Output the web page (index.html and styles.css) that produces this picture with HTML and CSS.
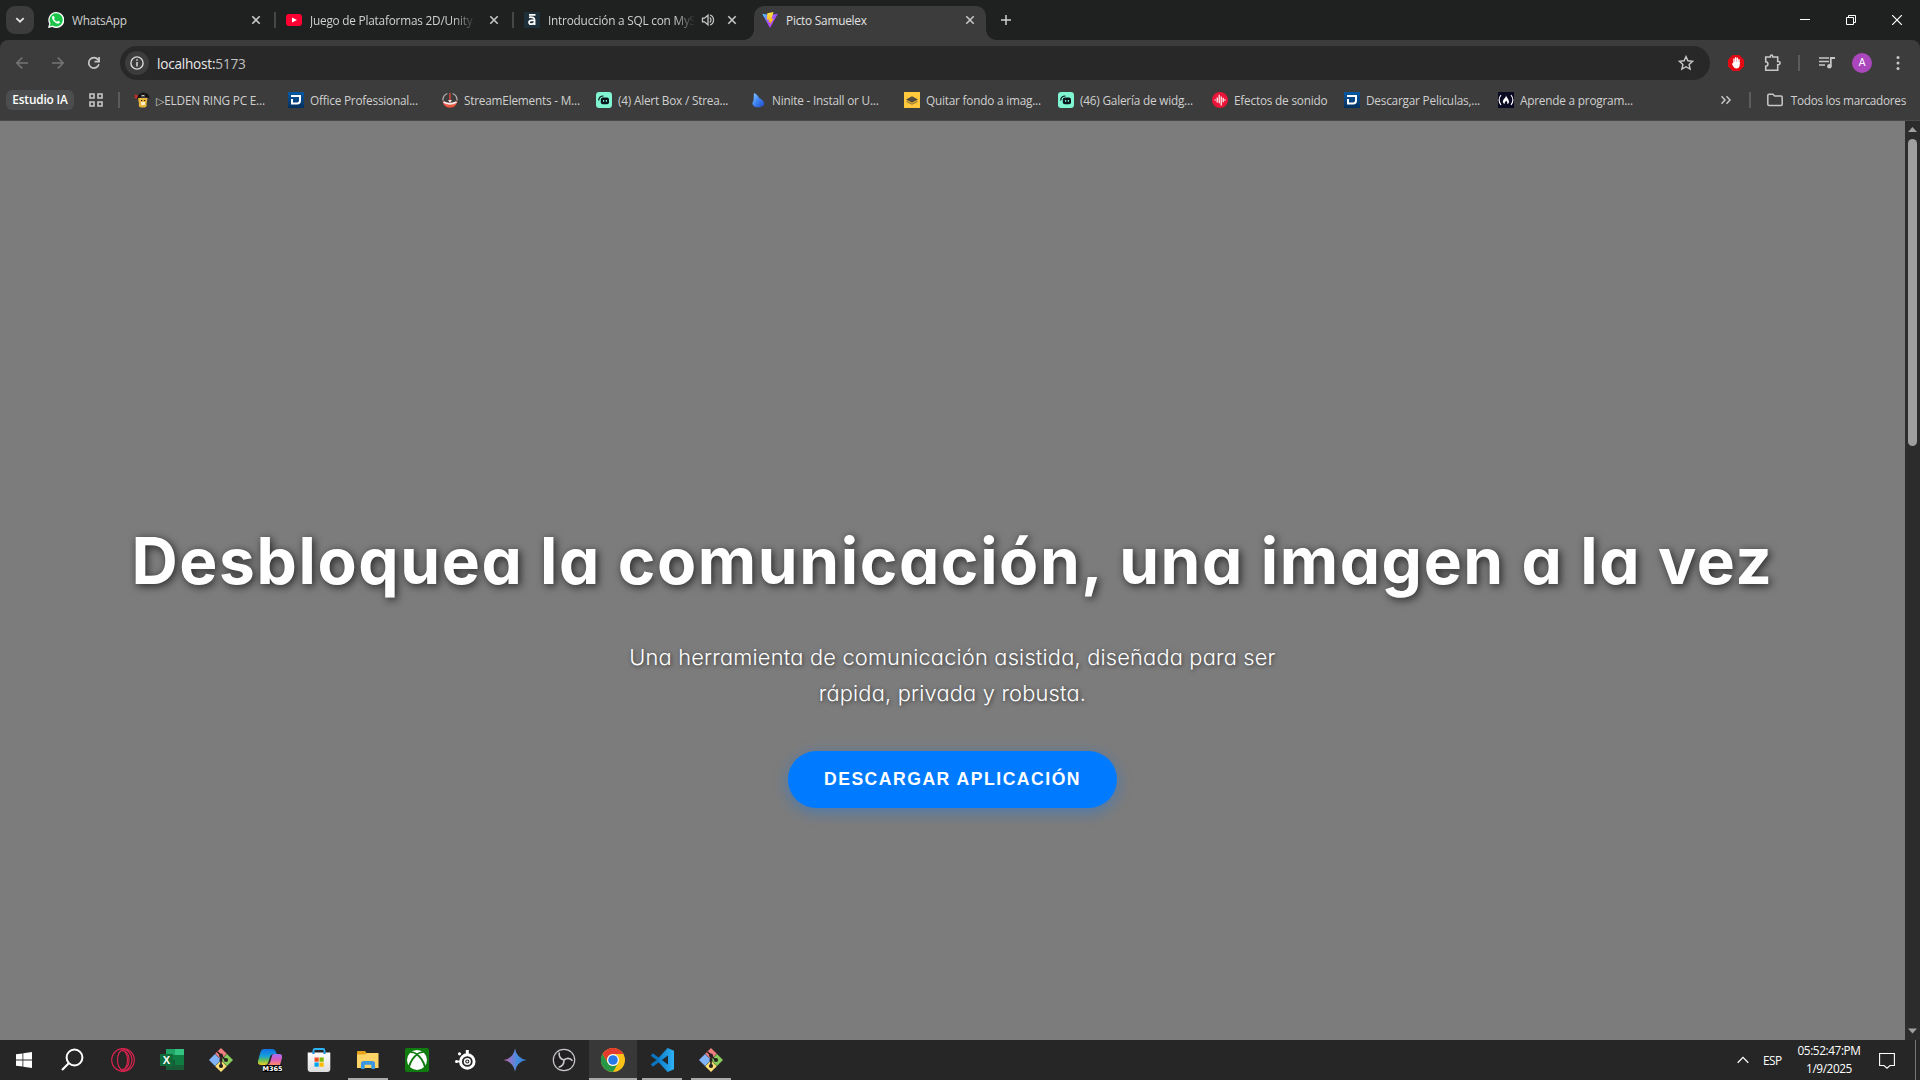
FILE: index.html
```html
<!DOCTYPE html>
<html lang="es">
<head>
<meta charset="utf-8">
<title>Picto Samuelex</title>
<link rel="stylesheet" href="styles.css">
</head>
<body>
<svg class="defs" width="0" height="0">
  <defs>
    <linearGradient id="navy" x1="0" y1="0" x2="0" y2="1"><stop offset="0" stop-color="#0759a5"/><stop offset="1" stop-color="#042f5c"/></linearGradient>
    <linearGradient id="vite" x1="0" y1="0" x2="1" y2="1"><stop offset="0" stop-color="#41d1ff"/><stop offset=".5" stop-color="#a34dfd"/><stop offset="1" stop-color="#bd34fe"/></linearGradient>
    <linearGradient id="bolt" x1="0" y1="0" x2="0" y2="1"><stop offset="0" stop-color="#ffe14a"/><stop offset="1" stop-color="#ffa800"/></linearGradient>
    <linearGradient id="gem" x1="0" y1="0" x2="1" y2="0"><stop offset="0" stop-color="#c2679a"/><stop offset=".35" stop-color="#7d7bd0"/><stop offset=".6" stop-color="#458fe0"/><stop offset="1" stop-color="#3578d4"/></linearGradient>
    <linearGradient id="cop1" x1="0" y1="0" x2="0" y2="1"><stop offset="0" stop-color="#0f70e8"/><stop offset=".45" stop-color="#18a0d8"/><stop offset=".7" stop-color="#62bd5a"/><stop offset="1" stop-color="#f2cf22"/></linearGradient>
    <linearGradient id="cop2" x1="0" y1="0" x2="0" y2="1"><stop offset="0" stop-color="#a56cf5"/><stop offset=".5" stop-color="#da5cc0"/><stop offset="1" stop-color="#ff8a68"/></linearGradient>
    <linearGradient id="drop" x1="0" y1="0" x2="1" y2="1"><stop offset="0" stop-color="#8ccaff"/><stop offset=".5" stop-color="#3d83f5"/><stop offset="1" stop-color="#2347c4"/></linearGradient>
    <linearGradient id="code" x1="0" y1="0" x2="1" y2="0"><stop offset="0" stop-color="#0a7cc9"/><stop offset="1" stop-color="#2fb1f5"/></linearGradient>
    <linearGradient id="bag" x1="0" y1="0" x2="0" y2="1"><stop offset="0" stop-color="#fff"/><stop offset="1" stop-color="#dcdcdc"/></linearGradient>
    <symbol id="close" viewBox="0 0 16 16"><path d="M4.3 4.3l7.4 7.4M11.7 4.3l-7.4 7.4" stroke="#c7c7c7" stroke-width="1.6"/></symbol>
    <symbol id="dlogo" viewBox="0 0 16 16"><path fill="url(#navy)" d="M0 0h16v16H0z"/><path d="M3 4h9v4.500q0 3-3 3H4V7" fill="none" stroke="#fff" stroke-width="2"/></symbol>
    <symbol id="slabs" viewBox="0 0 16 16"><rect width="16" height="16" rx="3.2" fill="#80f5d2"/><path d="M2.700 8.500Q2.900 4 7.500 4" fill="none" stroke="#09161d" stroke-width="1.200"/><rect x="4.800" y="5.500" width="8.200" height="6.800" rx="2" fill="#09161d"/><path d="M7.600 8v1.800M10.400 8v1.800" stroke="#80f5d2" stroke-width="1.200"/></symbol>
    <symbol id="git" viewBox="0 0 24 24"><path fill="#f07f7f" d="M12 0l5.800 5.800L12 11.600 6.200 5.800z"/><path fill="#81b3fb" d="M6 6l6 6-6 6-6-6z"/><path fill="#88cd5c" d="M18 6l6 6-6 6-6-6z"/><path fill="#ffe075" d="M12 12.400l5.800 5.800L12 24l-5.800-5.800z"/><g stroke="#262020" fill="none" stroke-width="1.600"><path d="M8.400 3.800l3.600 3.600v11M12 7.500l4.800 4.700"/></g><g fill="#262020"><circle cx="12" cy="7.600" r="2"/><circle cx="17" cy="12" r="2.100"/><circle cx="12" cy="18" r="2.100"/><circle cx="12" cy="12" r="1.600"/></g></symbol>
  </defs>
</svg>

<header class="browser">
  <div class="tabstrip">
    <div class="tabsearch"><svg width="12" height="12" viewBox="0 0 12 12"><path d="M2.300 4.100L6 7.700l3.700-3.600" fill="none" stroke="#e3e3e3" stroke-width="1.800"/></svg></div>
    <div class="tabs">
      <div class="tab"><svg width="16" height="16" viewBox="0 0 16 16"><path fill="#fff" d="M0 16l1.200-4.300A8 8 0 1 1 4.400 15z"/><path fill="#1bc54a" d="M1.700 14.300l.8-3A6.600 6.600 0 1 1 4.700 13.500z"/><path fill="#fff" d="M5.600 3.900c-.5-.3-1.600.5-1.500 1.800.2 2.500 3.300 5.700 5.900 5.900 1.200 0 2.200-.9 1.900-1.900L10 8.700l-.9 1C7.700 9.200 6.500 8.100 6 6.700l.8-.9z"/></svg><span class="tabtitle wide">WhatsApp</span><svg class="x" width="16" height="16"><use href="#close"/></svg></div>
      <div class="tab"><svg width="16" height="16" viewBox="0 0 16 16"><rect y="2" width="16" height="12" rx="3" fill="#ff0033"/><path fill="#fff" d="M6 5.500L11 8l-5 2.500z"/></svg><span class="tabtitle wide fade">Juego de Plataformas 2D/Unity</span><svg class="x" width="16" height="16"><use href="#close"/></svg></div>
      <div class="tab last"><svg width="16" height="16" viewBox="0 0 16 16"><path fill="#1e303a" d="M0 0h16v16H0z"/><path d="M5 2.800h6.500M5 5.300Q10.600 4.600 10.600 8V13M10.600 8.300H7.500Q5 8.300 5 10.300T7.300 12.200Q10.600 12.200 10.600 9.500" fill="none" stroke="#fff" stroke-width="1.700"/></svg><span class="tabtitle fade">Introducción a SQL con MyS</span><svg class="snd" width="14" height="14" viewBox="0 0 14 14"><path d="M1.500 5.200h2L7 2.200v9.600L3.500 8.800h-2z" fill="none" stroke="#c7c7c7" stroke-width="1.300"/><path d="M8.800 4.600a3 3 0 0 1 0 4.800M9 2a5.300 5.300 0 0 1 0 10" fill="none" stroke="#c7c7c7" stroke-width="1.200"/></svg><svg class="x" width="16" height="16"><use href="#close"/></svg></div>
      <div class="tab active"><svg width="16" height="16" viewBox="0 0 16 16"><path fill="url(#vite)" d="M.2 1.800L8 16l7.800-14.200L8 3z"/><path fill="url(#bolt)" d="M11.500 0L5.300 1.200 4.900 7.800l2.200-.4-.6 3 2-.6-.9 3.400 4.200-6.600-2.200.4z"/></svg><span class="tabtitle wide">Picto Samuelex</span><svg class="x" width="16" height="16"><use href="#close"/></svg></div>
    </div>
    <svg class="plus" width="12" height="12" viewBox="0 0 12 12"><path d="M6 1v10M1 6h10" stroke="#d0d0d0" stroke-width="1.500"/></svg>
    <div class="winbtns">
      <svg width="10" height="10" viewBox="0 0 10 10"><path d="M0 4.500h10" stroke="#fff"/></svg>
      <svg width="10" height="10" viewBox="0 0 10 10"><path d="M.5 2.500h7v7h-7zM2.500 2.500v-2h7v7h-2" fill="none" stroke="#fff"/></svg>
      <svg width="10" height="10" viewBox="0 0 10 10"><path d="M0 0l10 10M10 0L0 10" stroke="#fff" stroke-width="1.200"/></svg>
    </div>
  </div>

  <div class="toolbar">
    <div class="nav">
      <svg width="16" height="16" viewBox="0 0 16 16"><path d="M14 8H3M8.200 2.600L2.800 8l5.400 5.400" fill="none" stroke="#757575" stroke-width="1.500"/></svg>
      <svg width="16" height="16" viewBox="0 0 16 16"><path d="M2 8h11M7.800 2.600L13.200 8l-5.400 5.400" fill="none" stroke="#757575" stroke-width="1.500"/></svg>
      <svg width="16" height="16" viewBox="0 0 16 16"><path d="M12.900 9.300A5.200 5.200 0 1 1 12 4.600L13 6" fill="none" stroke="#c7c7c7" stroke-width="1.700"/><path d="M13.100 2v4.700H8.500" fill="none" stroke="#c7c7c7" stroke-width="1.700"/></svg>
    </div>
    <div class="omnibox">
      <div class="info"><svg width="14" height="14" viewBox="0 0 14 14"><circle cx="7" cy="7" r="6.100" fill="none" stroke="#d8d8d8" stroke-width="1.400"/><path d="M7 3.300v1.500M7 6v4.500" stroke="#d8d8d8" stroke-width="1.500"/></svg></div>
      <span class="url">localhost:<i>5173</i></span>
      <svg class="star" width="16" height="16" viewBox="0 0 16 16"><path d="M8 1.600l1.900 4.200 4.700.5-3.500 3.100 1 4.700L8 11.700l-4.100 2.400 1-4.700L1.400 6.300l4.700-.5z" fill="none" stroke="#c7c7c7" stroke-width="1.400"/></svg>
    </div>
    <div class="actions">
      <svg width="16" height="16" viewBox="0 0 16 16"><path fill="#e50914" d="M4.700 0h6.600L16 4.700v6.600L11.300 16H4.700L0 11.300V4.700z"/><path d="M6 8.500V4M7.700 8V2.800M9.400 8V3.200M11 8.500V4.600" stroke="#fff" stroke-width="1.400" stroke-linecap="round"/><path fill="#fff" d="M5.300 7h6.400v3.500q-.5 3-3.400 3-2 0-3-2L3.700 8.600q.6-.9 1.600.3z"/></svg>
      <svg width="18" height="18" viewBox="0 0 18 18"><path d="M1.700 3h4.600V2.300a1.200 1.200 0 0 1 2.400 0V3h5v4.500h.8a1.600 1.600 0 0 1 0 3.200h-.8v5.500h-12v-4c1.300 0 2.200-.8 2.200-2.200S3 7.700 1.700 7.700z" fill="none" stroke="#c7c7c7" stroke-width="1.600"/></svg>
      <b class="bar"></b>
      <svg width="18" height="16" viewBox="0 0 18 16"><path d="M1 3h10M1 6.500h10M1 10h6" stroke="#c7c7c7" stroke-width="1.500"/><path d="M12.800 11V3h4.200" fill="none" stroke="#c7c7c7" stroke-width="1.800"/><circle cx="11.400" cy="11.300" r="2.300" fill="#c7c7c7"/></svg>
      <span class="avatar">A</span>
      <svg width="4" height="16" viewBox="0 0 4 16"><g fill="#c7c7c7"><circle cx="2" cy="2.500" r="1.500"/><circle cx="2" cy="8" r="1.500"/><circle cx="2" cy="13.500" r="1.500"/></g></svg>
    </div>
  </div>

  <div class="bookmarks">
    <span class="chip">Estudio IA</span>
    <svg class="apps" width="16" height="16" viewBox="0 0 16 16"><path d="M2 2h4v4H2zM10 2h4v4h-4zM2 10h4v4H2zM10 10h4v4h-4z" fill="none" stroke="#c7c7c7" stroke-width="1.600"/></svg>
    <b class="bar"></b>
    <nav class="marks">
      <a class="b1"><svg width="16" height="16" viewBox="0 0 16 16"><path fill="#e7b43c" d="M4 6h9.500l-1 6q1 2.500-2 3.500H7q-3-1-2-3.500z"/><path fill="#fff0c9" d="M7 10h4v3H7z"/><path d="M7 8.500h1.300M10 8.500h1.300" stroke="#3a1e08"/><path fill="#161313" d="M2.800 6.800Q4 1 9.300.6 15 1 15.800 6.400 9.500 3.300 2.800 6.800z"/><path fill="#d92b24" d="M0 2.500l4 1-1.200 3L0 6l1.500-1.500z"/><path d="M7.500 3.200l3 1m0-1l-3 1" stroke="#ddd" stroke-width=".8"/></svg><span><i class="tri">▷</i>ELDEN RING PC E...</span></a>
      <a class="b2"><svg width="16" height="16"><use href="#dlogo"/></svg><span>Office Professional...</span></a>
      <a class="b3"><svg width="16" height="16" viewBox="0 0 16 16"><path d="M5.300 1.500A7 7 0 0 0 1 8.500M10.700 1.500A7 7 0 0 1 15 8.500" fill="none" stroke="#b5b0ae" stroke-width="1.300"/><path d="M.6 9q7.400 3.500 14.800 0-1 6.500-7.400 6.800Q1.600 15.500.6 9z" fill="#e9573f"/><path d="M1.500 10q6.500 3.800 13 0" fill="none" stroke="#eee" stroke-width="1.700"/><path d="M8 1v9" stroke="#d8453c" stroke-width="1.500"/><path d="M6 8h4L8 11z" fill="#ddd"/></svg><span>StreamElements - M...</span></a>
      <a class="b4"><svg width="16" height="16"><use href="#slabs"/></svg><span>(4) Alert Box / Strea...</span></a>
      <a class="b5"><svg width="16" height="16" viewBox="0 0 16 16"><path fill="url(#drop)" d="M4 1c3 1 4 3 5.200 5 3 1.500 5 3.500 5 6 0 2-3 3.400-6 3.400-4 0-6-1.700-5.800-4.700L3.500 8.500z"/></svg><span>Ninite - Install or U...</span></a>
      <a class="b6"><svg width="16" height="16" viewBox="0 0 16 16"><path fill="#ffc83d" d="M0 0h16v16H0z"/><path fill="#524a3c" d="M8 4.200l6 3.300-6 3.300-6-3.300z"/><path fill="#8a7132" d="M2.500 8.800L8 11.800l5.500-3V10L8 12.800 2.500 10z"/></svg><span>Quitar fondo a imag...</span></a>
      <a class="b7"><svg width="16" height="16"><use href="#slabs"/></svg><span>(46) Galería de widg...</span></a>
      <a class="b8"><svg width="16" height="16" viewBox="0 0 16 16"><circle cx="8" cy="8" r="8" fill="#ea1538"/><path d="M2.500 8h1.500M5.200 5.500v5M7.200 2.800v8.500M9.200 4.500v9M11.200 5.800v4.500M12 8h1.800" stroke="#fff" stroke-width="1.200"/></svg><span>Efectos de sonido</span></a>
      <a class="b9"><svg width="16" height="16"><use href="#dlogo"/></svg><span>Descargar Peliculas,...</span></a>
      <a class="b10"><svg width="16" height="16" viewBox="0 0 16 16"><path fill="#0a0a23" d="M0 0h16v16H0z"/><path d="M3 3Q-.8 8 3 13M13 3q3.800 5 0 10" fill="none" stroke="#fff" stroke-width="1.100"/><path fill="#fff" d="M8 3.500c.5 2 3 3.800 3 6.200 0 1-.6 1.900-1.800 2.400.5-1.700-.2-2.500-1.200-3.500C7.800 10 6 10.400 6.800 12 4 11 4.800 8.500 6 7c.8-1 2-2 2-3.500z"/></svg><span>Aprende a program...</span></a>
    </nav>
    <svg class="more" width="12" height="10" viewBox="0 0 12 10"><path d="M1.500 1.300L5 5 1.500 8.700M6.500 1.300L10 5 6.500 8.700" fill="none" stroke="#c7c7c7" stroke-width="1.500"/></svg>
    <b class="bar"></b>
    <a class="all"><svg width="16" height="14" viewBox="0 0 16 14"><path d="M.8 2.500q0-1.200 1.200-1.200h4L7.700 3H14q1.200 0 1.200 1.200v7q0 1.200-1.200 1.200H2Q.8 12.400.8 11.200z" fill="none" stroke="#c7c7c7" stroke-width="1.500"/></svg><span>Todos los marcadores</span></a>
  </div>
</header>

<div class="viewport">
  <main class="hero">
    <h1>Desbloquea la comunicación, una imagen a la vez</h1>
    <p>Una herramienta de comunicación asistida, diseñada para ser<br>rápida, privada y robusta.</p>
    <button class="cta">DESCARGAR APLICACIÓN</button>
  </main>
  <aside class="scroll">
    <svg width="15" height="17" viewBox="0 0 15 17"><path fill="#a0a0a0" d="M3 11l4.500-5L12 11z"/></svg>
    <div class="thumb"></div>
    <svg class="down" width="15" height="17" viewBox="0 0 15 17"><path fill="#a0a0a0" d="M3 5.500h9l-4.500 5z"/></svg>
  </aside>
</div>

<footer class="taskbar">
  <div class="apps-row">
    <div class="app"><svg width="16" height="16" viewBox="0 0 16 16"><path fill="#fff" d="M0 2.300l6.500-.9v6.200H0zM7.300 1.300L16 0v7.600H7.300zM0 8.400h6.500v6.200L0 13.700zM7.300 8.400H16V16l-8.700-1.300z"/></svg></div>
    <div class="app"><svg width="24" height="24" viewBox="0 0 24 24"><circle cx="13.500" cy="9.500" r="7.900" fill="none" stroke="#fff" stroke-width="2"/><path d="M8 15l-7 7" stroke="#fff" stroke-width="2.200"/></svg></div>
    <div class="app"><svg width="24" height="24" viewBox="0 0 24 24"><g fill="none" stroke="#d9234e" stroke-width="1.200"><circle cx="12" cy="12" r="11.300"/><ellipse cx="11.500" cy="12" rx="5" ry="9.700"/><path d="M10 .9c7.500.3 11 6 11 11.100S17.500 22.800 10 23.100M14 3.500c2.800 1.500 4 5 4 8.500s-1.200 7-4 8.500"/></g></svg></div>
    <div class="app"><svg width="24" height="24" viewBox="0 0 24 24"><path fill="#21a366" d="M6 1h18v7H6z"/><path fill="#33c481" d="M15 1h9v6h-9z"/><path fill="#107c41" d="M6 7h18v9H6z"/><path fill="#185c37" d="M6 12h18v10H6z"/><path fill="#107c41" d="M15 12h9v5h-9z"/><path fill="#0f6b39" d="M0 6h13v12H0z"/><text x="6.300" y="16.200" text-anchor="middle" class="xl">X</text></svg></div>
    <div class="app"><svg width="24" height="24"><use href="#git"/></svg></div>
    <div class="app"><svg width="24" height="24" viewBox="0 0 24 24"><path fill="url(#cop1)" d="M6 1h8q3 0 4 3l.7 2h-3Q13 6 12 9l-2 6q-.7 2-3 2H3q-4 0-3-4L2.500 4Q3.500 1 6 1z"/><path fill="url(#cop2)" d="M15.500 6H21q4 0 3 4l-2 7H9.500q2-.5 2.700-3L14 8q.5-2 1.500-2z"/><path d="M5 17.200h19V24H5z"/><text x="14.500" y="23.200" text-anchor="middle" class="m3">M365</text></svg></div>
    <div class="app"><svg width="24" height="24" viewBox="0 0 24 24"><path fill="url(#bag)" d="M.7 4.500h22.600V21q0 3-3 3H3.700q-3 0-3-3z"/><path d="M6.500 6V2.500Q6.500 1 8 1h8q1.500 0 1.500 1.500V6" fill="none" stroke="#2eb3f4" stroke-width="1.800"/><path d="M6.500 6V4.300M17.500 6V4.300" stroke="#1687d0" stroke-width="1.800"/><path fill="#f25022" d="M7.500 9.500h4.200v4.200H7.500z"/><path fill="#7fba00" d="M12.500 9.500h4.200v4.200h-4.200z"/><path fill="#00a4ef" d="M7.500 14.500h4.200v4.200H7.500z"/><path fill="#ffb900" d="M12.500 14.500h4.200v4.200h-4.200z"/></svg></div>
    <div class="app run"><svg width="24" height="24" viewBox="0 0 24 24"><path fill="#e5a41c" d="M1 4q0-1 1-1h7l2 2.500V9H1z"/><path fill="#ffd467" d="M1 6.500h8L11 5h11.500v15H1z"/><path fill="#3a97df" d="M5 21v-5.500q0-2.500 2.500-2.500h9q2.500 0 2.500 2.500V21h-3.700v-4.300H8.700V21z"/></svg></div>
    <div class="app"><svg width="24" height="24" viewBox="0 0 24 24"><rect width="24" height="24" rx="2" fill="#107c10"/><circle cx="12" cy="12" r="10" fill="#fff"/><path fill="#107c10" d="M5 3.300Q8.500 3 12 5.300 15.500 3 19 3.300L18.500 5Q15.500 4.500 12 7 8.500 4.500 5.500 5z"/><path fill="none" stroke="#107c10" stroke-width="1.900" d="M12 6.600Q6.500 10.500 4 19M12 6.600q5.500 3.900 8 12.400"/></svg></div>
    <div class="app"><svg width="24" height="24" viewBox="0 0 24 24"><g fill="none" stroke="#fff"><circle cx="13.300" cy="13.500" r="6.800" stroke-width="2.900"/><circle cx="13.300" cy="13.500" r="2.800" stroke-width="1.500"/><path d="M13.300 6V2" stroke-width="3"/></g><circle cx="13.300" cy="13.500" r="1" fill="#fff"/><circle cx="5.500" cy="5.800" r="1.600" fill="#fff"/><circle cx="2.500" cy="13.500" r="1.500" fill="#fff"/><path d="M3 13.500h4" stroke="#fff" stroke-width="1.800"/></svg></div>
    <div class="app"><svg width="24" height="24" viewBox="0 0 24 24"><path fill="url(#gem)" d="M12 .5q1.700 9.800 11.500 11.500Q13.700 13.700 12 23.500 10.300 13.700.5 12 10.300 10.300 12 .5z"/></svg></div>
    <div class="app"><svg width="24" height="24" viewBox="0 0 24 24"><circle cx="12" cy="12" r="10.700" fill="#211f22" stroke="#c9c7ca" stroke-width="1.200"/><g fill="none" stroke="#c9c7ca" stroke-width="1.600"><path d="M7.200 4.500q-.8 5.800 4.800 7.500M12 12q4.800-3.600 8.500.8M12 12q.2 6-5.300 7.200"/></g></svg></div>
    <div class="app current"><svg width="24" height="24" viewBox="0 0 24 24"><circle cx="12" cy="12" r="12" fill="#fbc116"/><path fill="#e33b2e" d="M1.600 6A12 12 0 0 1 22.400 6H12a6 6 0 0 0-5.200 9z"/><path fill="#279847" d="M1.600 6A12 12 0 0 0 12 24l5.200-9A6 6 0 0 1 6.800 15z"/><circle cx="12" cy="12" r="6" fill="#fff"/><circle cx="12" cy="12" r="4.800" fill="#2878e8"/></svg></div>
    <div class="app run"><svg width="24" height="24" viewBox="0 0 24 24"><path d="M18 5.500L1.800 17.500M18 18.500L1.800 6.500" stroke="#0b75bd" stroke-width="3.400"/><path fill="url(#code)" d="M17.700 0L24 2.700v18.600L17.700 24 8 13.800v-3.600zM18 7l-6.500 5L18 17z" fill-rule="evenodd"/></svg></div>
    <div class="app run"><svg width="24" height="24"><use href="#git"/></svg></div>
  </div>
  <div class="tray">
    <svg width="12" height="8" viewBox="0 0 12 8"><path d="M.7 6.700L6 1.400l5.300 5.300" fill="none" stroke="#fff" stroke-width="1.300"/></svg>
    <span class="lang">ESP</span>
    <div class="clock"><span>05:52:47:PM</span><span>1/9/2025</span></div>
    <svg width="16" height="17" viewBox="0 0 16 17"><path d="M.6 1.500h14.800v12H11l-3 2.700-3-2.700H.6z" fill="none" stroke="#fff" stroke-width="1.100"/></svg>
    <b class="peek"></b>
  </div>
</footer>
</body>
</html>
```
FILE: styles.css
```css
* { box-sizing: border-box; }
html, body { margin: 0; height: 100%; }
body {
  display: flex; flex-direction: column;
  height: 1080px; overflow: hidden;
  background: #1f2120;
  font-family: "Open Sans", "Noto Sans", sans-serif;
  font-size: 11.8px; letter-spacing: -.21px; color: #d0d0d0;
}
svg { display: block; flex: none; }
i { font-style: normal; }
.defs { position: absolute; }
.bar { width: 2px; height: 16px; background: #5c5c5c; flex: none; }

.browser { height: 121px; flex: none; }
.tabstrip { display: flex; height: 40px; align-items: flex-start; }
.tabsearch {
  width: 28px; height: 28px; margin: 6px 0 0 6px; border-radius: 9px;
  background: #3c3c3c; display: flex; align-items: center; justify-content: center;
}
.tabs { display: flex; margin-left: 6px; }
.tab {
  width: 238px; height: 34px; margin-top: 6px; padding: 0 12px 6px 8px;
  display: flex; align-items: center; position: relative;
}
.tab:not(.active):not(.last)::after {
  content: ""; position: absolute; right: 2px; top: 6px; width: 2px; height: 16px; background: #444746;
}
.tab.active { width: 232px; background: #3c3c3c; border-radius: 10px 10px 0 0; padding-right: 8px; }
.tab.active::before, .tab.active::after {
  content: ""; position: absolute; bottom: 0; width: 10px; height: 10px;
}
.tab.active::before { left: -10px; background: radial-gradient(circle at 0 0, transparent 9.500px, #3c3c3c 10px); }
.tab.active::after { right: -10px; background: radial-gradient(circle at 100% 0, transparent 9.500px, #3c3c3c 10px); }
.tabtitle { margin-left: 8px; white-space: nowrap; overflow: hidden; width: 147px; flex: none; }
.tabtitle.wide { width: 166px; }
.fade { -webkit-mask-image: linear-gradient(90deg, #000 86%, transparent); mask-image: linear-gradient(90deg, #000 86%, transparent); }
.tab .x { margin-left: auto; margin-right: 2px; }
.tab .snd { margin-left: 6px; }
.active .tabtitle { color: #e3e3e3; }
.tab.active .x { margin-right: 0; }
.plus { margin: 14px 0 0 14px; }
.winbtns { display: flex; margin-left: auto; gap: 36px; padding: 15px 18px 0 0; }

.toolbar {
  display: flex; height: 40px; align-items: center; background: #3c3c3c;
  border-radius: 8px 8px 0 0; padding-top: 6px;
}
.nav { display: flex; gap: 20px; margin-left: 14px; }
.omnibox {
  display: flex; align-items: center; width: 1590px; height: 34px; margin-left: 18px;
  background: #282828; border-radius: 17px; padding: 0 16px 0 5px;
}
.info { width: 24px; height: 24px; border-radius: 12px; background: #3c3c3c; display: flex; align-items: center; justify-content: center; }
.url { margin-left: 8px; font-size: 13.600px; color: #e8e8e8; letter-spacing: -.22px; }
.url i { color: #c0c0c0; }
.star { margin-left: auto; }
.actions { display: flex; align-items: center; margin-left: 18px; }
.actions > :nth-child(2) { margin-left: 20px; }
.actions > :nth-child(3) { margin-left: 16px; }
.actions > :nth-child(4) { margin-left: 18px; }
.actions > :nth-child(6) { margin-left: 24px; }
.avatar {
  width: 20px; height: 20px; margin-left: 16px; border-radius: 10px; background: #ab47bc; color: #fff;
  font-family: Roboto, sans-serif; font-size: 11px; line-height: 20px; text-align: center;
}

.bookmarks {
  display: flex; height: 41px; align-items: center; background: #3c3c3c;
  padding: 0 14px 1px 6px; border-bottom: 1px solid #4a4a4a; white-space: nowrap;
}
.chip { width: 68px; height: 20px; border-radius: 6px; background: #4b4d4e; color: #fff; font-weight: 600; line-height: 19px; text-align: center; letter-spacing: -.15px; }
.apps { margin-left: 14px; }
.bookmarks .bar { margin-left: 14px; }
.marks { display: flex; margin-left: 14px; }
.marks a { display: flex; align-items: center; gap: 6px; width: 154px; }
.tri { font: 11px/1 "DejaVu Sans", sans-serif; }
.marks .b8 { width: 132px; }
.marks .b10 { width: 140px; }
.more { margin-left: auto; margin-right: 3px; }
.all { display: flex; align-items: center; gap: 8px; margin-left: 16px; letter-spacing: -.3px; }

.viewport { display: flex; flex: none; height: 919px; }
.hero {
  flex: 1; background: #7c7c7c; color: #fff; text-align: center; letter-spacing: normal;
  display: flex; flex-direction: column; align-items: center; padding-top: 392px;
}
.hero h1 {
  margin: 0; font: 650 64px/96px Inter, sans-serif; font-feature-settings: "cv11"; letter-spacing: 1.600px;
  text-shadow: 2px 2px 8px rgba(0, 0, 0, .7); white-space: nowrap;
}
.hero p {
  margin: 30px 0 0; font: 300 21.800px/36px Inter, sans-serif; font-feature-settings: "cv11"; letter-spacing: .2px;
  text-shadow: 1px 1px 4px rgba(0, 0, 0, .6); white-space: nowrap;
}
.cta {
  margin-top: 40px; width: 329px; height: 57px; border: 0; border-radius: 29px;
  background: #007bff; color: #fff; font: 700 17.600px "Liberation Sans", sans-serif; letter-spacing: 1.500px;
  box-shadow: 0 4px 15px rgba(0, 123, 255, .4); padding: 0; white-space: nowrap;
}
.scroll { width: 15px; background: #2c2c2c; display: flex; flex-direction: column; align-items: center; }
.thumb { width: 9px; height: 307px; border-radius: 5px; background: #9f9f9f; margin-top: 1px; }
.down { margin-top: auto; }

.taskbar { display: flex; height: 40px; background: #262626; color: #fff; }
.apps-row { display: flex; gap: 1px; }
.app { width: 48px; height: 40px; display: flex; align-items: center; justify-content: center; border-bottom: 2px solid transparent; padding-top: 2px; }
.app:nth-child(2) { margin-right: 1px; }
.run { border-image: linear-gradient(90deg, transparent 4px, #aaa 4px, #aaa 44px, transparent 44px) 0 0 2 0; }
.current { background: #383838; border-bottom-color: #aaa; }
.xl { font: 700 11px "Liberation Sans", sans-serif; fill: #fff; }
.m3 { font: 700 6.500px "DejaVu Sans", sans-serif; fill: #fff; letter-spacing: 0; }
.tray { display: flex; align-items: center; margin-left: auto; }
.lang { margin-left: 14px; width: 19px; letter-spacing: -.5px; }
.clock { display: flex; flex-direction: column; align-items: center; margin: -2px 17px 0 14px; width: 66px; line-height: 18px; white-space: nowrap; letter-spacing: -.4px; }
.peek { width: 1px; height: 40px; background: #777; margin: 0 4px 0 20px; }
```
